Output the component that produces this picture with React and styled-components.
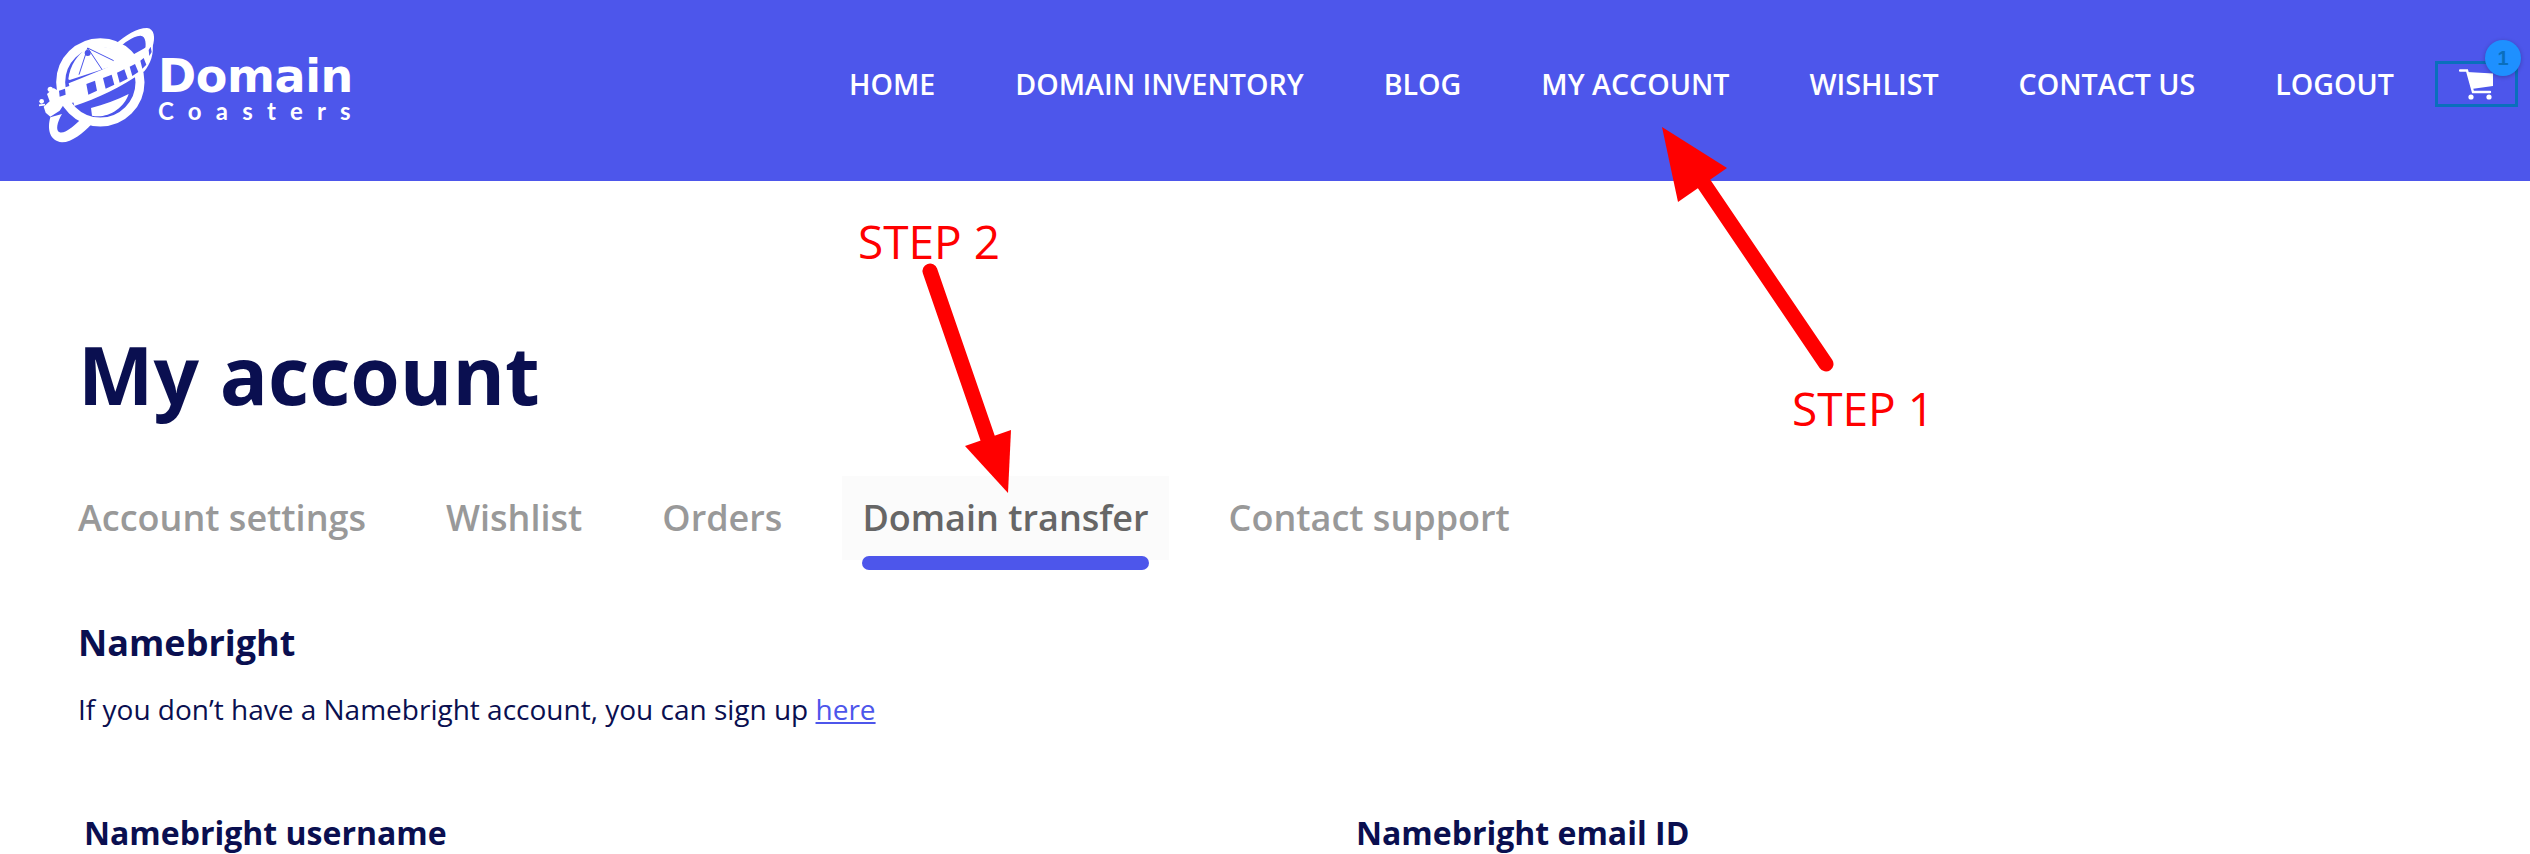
import React from 'react'
import styled, { createGlobalStyle } from 'styled-components'

const GlobalStyle = createGlobalStyle`
  html, body { margin: 0; padding: 0; background: #fff; overflow: hidden; }
  body { font-family: "Open Sans", "Liberation Sans", sans-serif; }
`

const Page = styled.div`
  position: relative;
  width: 2530px;
  height: 854px;
  overflow: hidden;
`

const Header = styled.header`
  display: flex;
  align-items: center;
  justify-content: space-between;
  height: 181px;
  padding: 0 12px 13px 37px;
  box-sizing: border-box;
  background: #4d56eb;
`

const Logo = styled.a`
  display: flex;
  align-items: center;
  gap: 1px;
  color: #fff;
`

const LogoMark = styled.svg`
  width: 120px;
  height: 120px;
  flex: none;
`

const LogoText = styled.div`
  display: flex;
  flex-direction: column;
  margin-top: 8px;
`

const LogoTitle = styled.span`
  font-family: "DejaVu Sans", sans-serif;
  font-weight: 700;
  font-size: 46px;
  line-height: 46px;
  letter-spacing: -0.4px;
`

const LogoSub = styled.span`
  font-family: "Lato", sans-serif;
  font-weight: 700;
  font-size: 24px;
  line-height: 24px;
  letter-spacing: 14.2px;
`

const Nav = styled.nav`
  display: flex;
  align-items: center;
`

const NavLink = styled.a`
  margin-right: 80px;
  color: #fff;
  font-size: 28.6px;
  font-weight: 600;
  line-height: 38px;
  white-space: nowrap;
  &:last-of-type { margin-right: 41px; }
`

const CartButton = styled.button`
  position: relative;
  display: flex;
  align-items: center;
  justify-content: center;
  width: 83px;
  height: 46px;
  padding: 0;
  box-sizing: border-box;
  border: 3px solid #0a6fbc;
  background: transparent;
`

const CartBadge = styled.span`
  position: absolute;
  top: -24px;
  right: -6px;
  width: 36px;
  height: 36px;
  border-radius: 50%;
  background: #1e90ff;
  box-shadow: 0 1px 4px rgba(0, 0, 0, 0.25);
  color: #0a6fbc;
  font-size: 20px;
  font-weight: 700;
  line-height: 36px;
  text-align: center;
`

const CartIcon = styled.svg`
  width: 36px;
  height: 31px;
  margin-top: 1px;
`

const Main = styled.main`
  padding: 0 0 0 78px;
  color: #0a0f50;
`

const Title = styled.h1`
  margin: 0;
  padding-top: 138px;
  font-size: 80px;
  font-weight: 700;
  line-height: 109px;
`

const Tabs = styled.div`
  display: flex;
  margin: 48px 0 0 -20px;
`

const Tab = styled.a`
  position: relative;
  padding: 0 20px;
  height: 84px;
  margin-right: 40px;
  background: ${p => (p.$active ? '#fbfbfb' : 'transparent')};
  color: ${p => (p.$active ? '#666' : '#999')};
  font-size: 36px;
  font-weight: 600;
  line-height: 84px;
  white-space: nowrap;
  ${p => p.$active && `
    &::after {
      content: '';
      position: absolute;
      left: 20px;
      right: 20px;
      bottom: -10px;
      height: 14px;
      border-radius: 7px;
      background: #4d56eb;
    }
  `}
`

const SectionTitle = styled.h2`
  margin: 58px 0 0;
  font-size: 36px;
  font-weight: 700;
  line-height: 50px;
`

const Intro = styled.p`
  margin: 22px 0 0;
  font-size: 28px;
  line-height: 38px;
  a { color: #4d56eb; }
`

const FormRow = styled.div`
  display: grid;
  grid-template-columns: 1272px 1fr;
  margin: 83px 0 0 6px;
`

const FieldLabel = styled.label`
  font-size: 32px;
  font-weight: 700;
  line-height: 44px;
`

const Overlay = styled.svg`
  position: absolute;
  inset: 0;
  width: 2530px;
  height: 854px;
  pointer-events: none;
`

const StepLabel = styled.span`
  position: absolute;
  left: ${p => p.$x}px;
  top: ${p => p.$y}px;
  color: #f00;
  font-size: 46px;
  line-height: 62px;
  white-space: nowrap;
`

const navItems = ['HOME', 'DOMAIN INVENTORY', 'BLOG', 'MY ACCOUNT', 'WISHLIST', 'CONTACT US', 'LOGOUT']
const tabs = ['Account settings', 'Wishlist', 'Orders', 'Domain transfer', 'Contact support']

const App = () => (
  <Page>
    <GlobalStyle />
    <Header>
      <Logo>
        <LogoMark viewBox="110 70 360 360">
          <circle cx="300" cy="245" r="119" fill="none" stroke="#fff" strokeWidth="27" />
          {/* globe patches */}
          <path d="M204 236C208 195 232 160 262 142C310 130 365 145 392 178L208 238Z" fill="#fff" />
          <path d="M262 142L236 222M262 142L306 208M262 142L340 180" stroke="#4d56eb" strokeWidth="3" fill="none" />
          <circle cx="262" cy="157" r="9" fill="#4d56eb" />
          <path d="M272 322C310 312 350 298 385 280C370 325 320 355 275 345Z" fill="#fff" />
          {/* back of the track */}
          <path d="M345 130C375 105 410 82 440 82C462 84 466 110 456 140L432 160C440 130 436 104 420 105C395 108 372 126 352 145Z" fill="#fff" />
          <path d="M150 350C140 385 148 422 185 425C215 425 250 395 272 372L250 348C225 372 195 400 178 395C165 390 170 365 185 340Z" fill="#fff" />
          {/* front of the track */}
          <path d="M205 248C290 215 385 175 456 128C462 160 450 190 432 212C360 260 290 295 222 316Z" fill="#fff" />
          <path d="M258 250L284 240L290 270L264 282ZM308 232L334 222L342 252L316 264ZM350 216L372 206L382 234L358 246ZM388 198L404 190L414 214L396 226ZM420 180L430 172L438 192L426 204ZM445 148L451 138L454 154L447 166Z" fill="#4d56eb" />
          {/* coaster cars */}
          <path d="M160 262L170 268L188 262L214 254L232 284L226 304L190 312L178 330L150 348L136 336L130 318L148 302L140 280Z" fill="#fff" />
          <circle cx="150" cy="266" r="8" fill="#fff" />
          <circle cx="124" cy="302" r="7" fill="#fff" />
          <path d="M116 314L134 312" stroke="#fff" strokeWidth="5" />
          <path d="M176 270L194 264L196 282L178 288Z" fill="#4d56eb" />
        </LogoMark>
        <LogoText>
          <LogoTitle>Domain</LogoTitle>
          <LogoSub>Coasters</LogoSub>
        </LogoText>
      </Logo>
      <Nav>
        {navItems.map(item => <NavLink key={item}>{item}</NavLink>)}
        <CartButton>
          <CartIcon viewBox="0 0 36 31">
            <path d="M1 1.5H8L14 23H31" fill="none" stroke="#fff" strokeWidth="2.4" strokeLinecap="round" />
            <path d="M8 3L34 4.5V17L12.5 20Z" fill="#fff" />
            <circle cx="12" cy="28" r="2.6" fill="#fff" />
            <circle cx="30" cy="28" r="2.6" fill="#fff" />
          </CartIcon>
          <CartBadge>1</CartBadge>
        </CartButton>
      </Nav>
    </Header>
    <Main>
      <Title>My account</Title>
      <Tabs>
        {tabs.map(tab => <Tab key={tab} $active={tab === 'Domain transfer'}>{tab}</Tab>)}
      </Tabs>
      <SectionTitle>Namebright</SectionTitle>
      <Intro>If you don’t have a Namebright account, you can sign up <a href="#here">here</a></Intro>
      <FormRow>
        <FieldLabel>Namebright username</FieldLabel>
        <FieldLabel>Namebright email ID</FieldLabel>
      </FormRow>
    </Main>
    <Overlay viewBox="0 0 2530 854">
      <path d="M1826 364L1696 172" stroke="#f00" strokeWidth="15" strokeLinecap="round" fill="none" />
      <path d="M1662 127L1727 168L1678 202Z" fill="#f00" />
      <path d="M930 271L990 445" stroke="#f00" strokeWidth="15" strokeLinecap="round" fill="none" />
      <path d="M1008 493L965 446L1011 430Z" fill="#f00" />
    </Overlay>
    <StepLabel $x={858} $y={210}>STEP 2</StepLabel>
    <StepLabel $x={1792} $y={377}>STEP 1</StepLabel>
  </Page>
)

export default App
